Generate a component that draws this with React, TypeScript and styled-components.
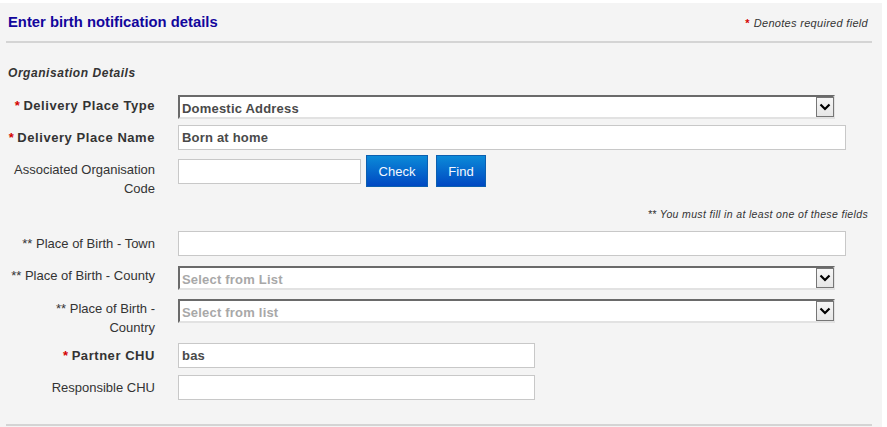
import React from "react";
import styled, { createGlobalStyle } from "styled-components";

const Global = createGlobalStyle`
  html, body { margin: 0; padding: 0; background: #ffffff; }
  body { font-family: "Liberation Sans", Arial, sans-serif; }
`;

const Panel = styled.div`
  margin-top: 3px;
  width: 882px;
  height: 424px;
  background: #f4f4f4;
  box-sizing: border-box;
  overflow: hidden;
`;

const Header = styled.div`
  height: 38px;
  display: flex;
  align-items: center;
  justify-content: space-between;
  padding: 0 14px 0 8px;
`;

const Title = styled.h1`
  margin: 0;
  font-size: 14.8px;
  font-weight: bold;
  color: #12069c;
`;

const Legend = styled.div`
  font-size: 11px;
  font-style: italic;
  color: #333;
  letter-spacing: 0.3px;
  margin-top: 2px;
`;

const Star = styled.span`
  color: #d40000;
  font-style: normal;
  font-weight: bold;
  margin-right: 4px;
`;

const Rule = styled.hr`
  margin: 0 10px 0 6px;
  border: 0;
  height: 2px;
  background: #d4d4d4;
`;

const SectionTitle = styled.div`
  margin: 22px 0 14px 8px;
  font-size: 12px;
  line-height: 16px;
  font-weight: bold;
  font-style: italic;
  color: #333;
  letter-spacing: 0.55px;
`;

const Row = styled.div<{ $mt: number }>`
  display: grid;
  grid-template-columns: 147px 1fr;
  column-gap: 23px;
  align-items: start;
  padding-left: 8px;
  margin-top: ${(p) => p.$mt}px;
`;

const Label = styled.label<{ $bold?: boolean; $pt: number }>`
  text-align: right;
  font-size: 13px;
  line-height: 19px;
  padding-top: ${(p) => p.$pt}px;
  color: #333;
  font-weight: ${(p) => (p.$bold ? "bold" : "normal")};
  letter-spacing: ${(p) => (p.$bold ? "0.55px" : "0")};
`;

const Req = styled.span`
  color: #d40000;
  margin-right: 3px;
`;

const TextInput = styled.div<{ $w: number }>`
  width: ${(p) => p.$w}px;
  height: 25px;
  box-sizing: border-box;
  background: #fff;
  border: 1px solid #c8c8c8;
  padding: 0 3px;
  display: flex;
  align-items: center;
  font-size: 13px;
  font-weight: bold;
  letter-spacing: 0.2px;
  color: #4a4a4a;
`;

const SelectBox = styled.div`
  width: 657px;
  height: 24px;
  box-sizing: border-box;
  background: #fff;
  border-top: 2px solid #6a6a6a;
  border-left: 2px solid #6a6a6a;
  border-bottom: 2px solid #e2e2e2;
  border-right: 2px solid #e2e2e2;
  display: flex;
  align-items: center;
  justify-content: space-between;
  padding-left: 2px;
`;

const SelectText = styled.span<{ $placeholder?: boolean }>`
  font-size: 13px;
  font-weight: bold;
  letter-spacing: 0.2px;
  color: ${(p) => (p.$placeholder ? "#a8a8a8" : "#4a4a4a")};
  padding-top: 2px;
`;

const ArrowButton = styled.div`
  width: 18px;
  height: 20px;
  box-sizing: border-box;
  border: 1px solid #767676;
  background: linear-gradient(#f6f6f6, #e6e6e6);
  display: flex;
  align-items: center;
  justify-content: center;
  margin-right: -1px;
`;

const Controls = styled.div`
  display: flex;
  align-items: center;
  gap: 5px;
`;

const Button = styled.button<{ $w: number }>`
  width: ${(p) => p.$w}px;
  height: 32px;
  border: 1px solid #0b5fb0;
  background: linear-gradient(#0b8ad8, #0048c2);
  color: #f4f8ff;
  font-family: "Liberation Sans", Arial, sans-serif;
  font-size: 13px;
  padding: 0;
  margin-left: ${(p) => (p.$w === 50 ? 3 : 0)}px;
`;

const Note = styled.div`
  margin-top: 10px;
  padding-right: 14px;
  text-align: right;
  font-size: 10.5px;
  font-style: italic;
  color: #333;
  letter-spacing: 0.35px;
`;

const BottomRule = styled(Rule)`
  margin-top: 24px;
`;

const Chevron = () => (
  <svg width="12" height="8" viewBox="0 0 12 8">
    <path d="M1.5 1.5 L6 6 L10.5 1.5" fill="none" stroke="#000" strokeWidth="2.2" />
  </svg>
);

const Select = ({ text, placeholder }: { text: string; placeholder?: boolean }) => (
  <SelectBox>
    <SelectText $placeholder={placeholder}>{text}</SelectText>
    <ArrowButton>
      <Chevron />
    </ArrowButton>
  </SelectBox>
);

export default function App() {
  return (
    <>
      <Global />
      <Panel>
        <Header>
          <Title>Enter birth notification details</Title>
          <Legend>
            <Star>*</Star>Denotes required field
          </Legend>
        </Header>
        <Rule />
        <SectionTitle>Organisation Details</SectionTitle>

        <Row $mt={0}>
          <Label $bold $pt={1}>
            <Req>*</Req>Delivery Place Type
          </Label>
          <Select text="Domestic Address" />
        </Row>

        <Row $mt={6}>
          <Label $bold $pt={3}>
            <Req>*</Req>Delivery Place Name
          </Label>
          <TextInput $w={668}>Born at home</TextInput>
        </Row>

        <Row $mt={5}>
          <Label $pt={5}>Associated Organisation Code</Label>
          <Controls>
            <TextInput $w={183} />
            <Button $w={62}>Check</Button>
            <Button $w={50}>Find</Button>
          </Controls>
        </Row>

        <Note>** You must fill in at least one of these fields</Note>

        <Row $mt={11}>
          <Label $pt={3}>** Place of Birth - Town</Label>
          <TextInput $w={668} />
        </Row>

        <Row $mt={10}>
          <Label $pt={0}>** Place of Birth - County</Label>
          <Select text="Select from List" placeholder />
        </Row>

        <Row $mt={9}>
          <Label $pt={0}>** Place of Birth - Country</Label>
          <Select text="Select from list" placeholder />
        </Row>

        <Row $mt={6}>
          <Label $bold $pt={3}>
            <Req>*</Req>Partner CHU
          </Label>
          <TextInput $w={357}>bas</TextInput>
        </Row>

        <Row $mt={7}>
          <Label $pt={3}>Responsible CHU</Label>
          <TextInput $w={357} />
        </Row>

        <BottomRule />
      </Panel>
    </>
  );
}
